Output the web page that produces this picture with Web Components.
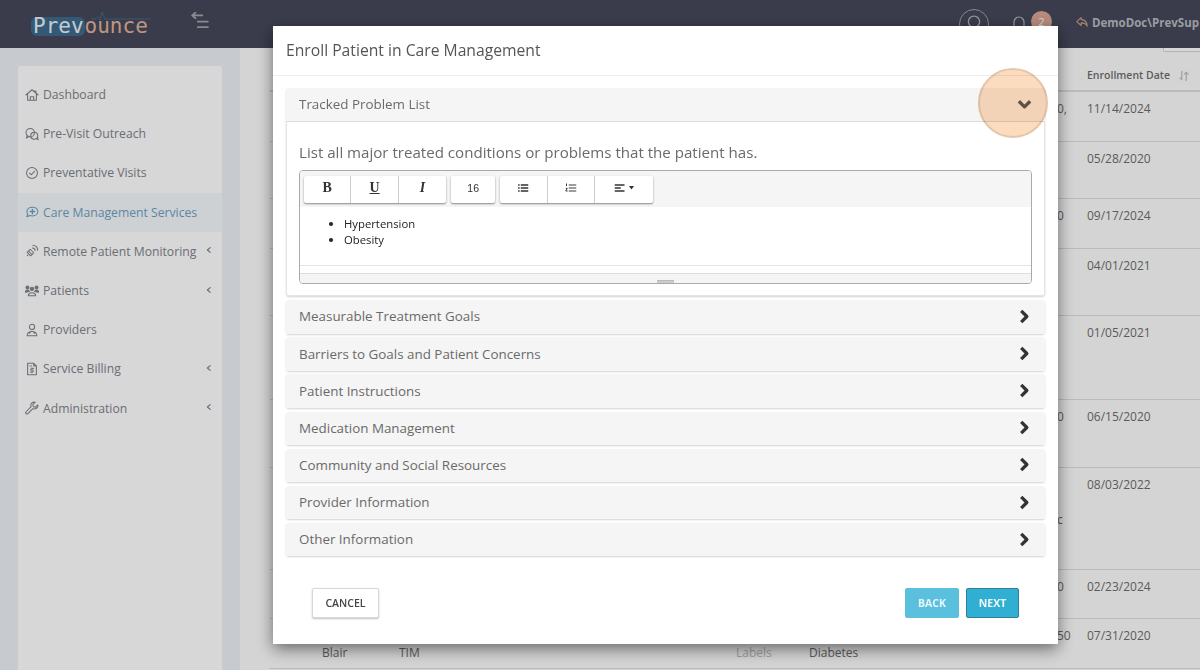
<!DOCTYPE html>
<html lang="en">
<head>
<meta charset="utf-8">
<title>Enroll Patient in Care Management</title>
<style>
	html, body { margin: 0; height: 100%; overflow: hidden; background: #fff; }
	body { font-family: "Open Sans", "Liberation Sans", sans-serif; }
</style>
</head>
<body>

<app-shell>
	<top-bar slot="top"></top-bar>
	<side-nav slot="side">
		<nav-item icon="home">Dashboard</nav-item>
		<nav-item icon="chats">Pre-Visit Outreach</nav-item>
		<nav-item icon="check">Preventative Visits</nav-item>
		<nav-item icon="chatplus" active>Care Management Services</nav-item>
		<nav-item icon="signal" more>Remote Patient Monitoring</nav-item>
		<nav-item icon="users" more>Patients</nav-item>
		<nav-item icon="doctor">Providers</nav-item>
		<nav-item icon="bill" more>Service Billing</nav-item>
		<nav-item icon="wrench" more>Administration</nav-item>
	</side-nav>
	<patient-table slot="main">
		<table-row h="50" date="11/14/2024" code="0,"></table-row>
		<table-row h="57" date="05/28/2020"></table-row>
		<table-row h="50" date="09/17/2024" code="0"></table-row>
		<table-row h="67" date="04/01/2021"></table-row>
		<table-row h="84" date="01/05/2021"></table-row>
		<table-row h="68" date="06/15/2020" code="0"></table-row>
		<table-row h="102" date="08/03/2022" extra="c"></table-row>
		<table-row h="49" date="02/23/2024" code="0"></table-row>
		<table-row h="50" date="07/31/2020" code="50" last="Blair" first="TIM" label="Labels" cond="Diabetes"></table-row>
	</patient-table>
</app-shell>

<enroll-modal>
	<acc-panel open>Tracked Problem List
		<div slot="body" class="prompt">List all major treated conditions or problems that the patient has.</div>
		<rich-editor slot="body"></rich-editor>
	</acc-panel>
	<acc-panel>Measurable Treatment Goals</acc-panel>
	<acc-panel>Barriers to Goals and Patient Concerns</acc-panel>
	<acc-panel>Patient Instructions</acc-panel>
	<acc-panel>Medication Management</acc-panel>
	<acc-panel>Community and Social Resources</acc-panel>
	<acc-panel>Provider Information</acc-panel>
	<acc-panel>Other Information</acc-panel>
</enroll-modal>

<script>
const svg = ( body, size = 14, box = 16 ) =>
	`<svg width="${size}" height="${size}" viewBox="0 0 ${box} ${box}" fill="none" stroke="currentColor" stroke-width="1.2" stroke-linecap="round" stroke-linejoin="round">${body}</svg>`

const NAV_ICONS = {
	home: `<path d="M1 8 8 2l7 6M3 7v7h10V7M6 14v-4h4v4M11 3.5h1.5V5"/>`,
	chats: `<circle cx="6" cy="6.5" r="4.8"/><circle cx="10.5" cy="10" r="4"/><path d="M2.5 10 1.5 12.5 4.5 11M13 13l2 1.5-.6-2.6"/>`,
	check: `<circle cx="8" cy="8" r="6.2"/><path d="M5.3 8.2 7.3 10l3.5-3.8"/>`,
	chatplus: `<path d="M8.5 2.5c3.6 0 6.2 2.2 6.2 5s-2.600 5-6.200 5c-1 0-1.900-.2-2.700-.5L2 13.500l1.200-3C2.500 9.600 2.200 8.600 2.200 7.500c0-2.800 2.700-5 6.300-5Z"/><path d="M8.500 5v5M6 7.500h5" stroke-width="1.600"/>`,
	signal: `<path d="M2.500 9.500 6 6l4 4-3.500 3.500Z"/><path d="M4 8l4 4M2.500 13.500l1-1M8.500 4.500c1.700 0 3 1.300 3 3M9 1.500c3 0 5.500 2.500 5.500 5.500"/>`,
	users: `<circle cx="2.800" cy="4" r="1.700" fill="currentColor"/><circle cx="8" cy="5.500" r="1.900" fill="currentColor"/><circle cx="13.200" cy="4" r="1.700" fill="currentColor"/><path d="M.5 9.500c0-1.500 1-2.500 2.300-2.500s2 .5 2.200 1.500ZM11 8.500c.2-1 1-1.500 2.200-1.500s2.300 1 2.300 2.500Z" fill="currentColor"/><path d="M3.800 13.500c0-2 1.800-3.500 4.200-3.500s4.200 1.500 4.200 3.500Z"/>`,
	doctor: `<circle cx="8" cy="4.500" r="3"/><path d="M2.500 14.500c0-3 2.500-4.800 5.500-4.800s5.500 1.800 5.500 4.800ZM5.500 10v2M10.500 10v2"/>`,
	bill: `<path d="M3 1.500h7l3 3v10H3ZM10 1.500v3h3"/><path d="M5.500 4.500h2M10 7.500H7c-1 0-1 2 0 2h2c1 0 1 2 0 2H6M8 6.500v6" stroke-width="1"/>`,
	wrench: `<path d="M14.500 4.500 12 7 9.500 6.500 9 4 11.500 1.500C9.500.8 7.300 1.800 6.800 3.800 6.500 4.800 6.700 5.800 7 6.500L1.500 12c-.8.800-.8 1.700-.2 2.300s1.500.600 2.300-.2L9 8.700c.8.400 1.700.500 2.700.2 2-.5 3.400-2.400 2.800-4.400Z"/>`,
	}

class AppShell extends HTMLElement {
	constructor() {
		super()
		this.attachShadow({ mode: "open" }).innerHTML = `<style>
				:host {
					display: grid;
					grid-template-columns: 240px 1fr;
					grid-template-rows: 48px 622px;
					width: 1200px;
					height: 670px;
					overflow: hidden;
					}
				.top { grid-column: 1 / 3; }
				</style>
			<div class="top"><slot name="top"></slot></div>
			<slot name="side"></slot>
			<slot name="main"></slot>`
		}
	static { customElements.define( "app-shell", this ) }
	}

class TopBar extends HTMLElement {
	constructor() {
		super()
		this.attachShadow({ mode: "open" }).innerHTML = `<style>
				:host {
					display: flex;
					align-items: center;
					height: 48px;
					background: #45485a;
					color: #b4b6bc;
					}
				.logo {
					position: relative;
					display: flex;
					margin: 4px 0 0 33px;
					width: 116px;
					font: 400 21px/19px "DejaVu Sans Mono", monospace;
					}
				.logo b {
					font-weight: 400;
					color: #e9f2f8;
					background: #3d6a8c;
					border-radius: 6px;
					padding: 0 1px 0 2px;
					margin-left: -2px;
					}
				.logo i { font-style: normal; color: #e1b29b; }
				.logo svg { position: absolute; left: 58px; top: -6px; }
				.menu { margin-left: 42px; margin-top: -6px; color: #a3a5ac; display: flex; }
				.right { margin-left: auto; display: flex; align-items: center; white-space: nowrap; }
				.search { width: 28px; border: 1px solid #a0a2aa; border-radius: 50%; display: flex; justify-content: center; padding-top: 5px; height: 23px; }
				.bell { margin-left: 22px; display: flex; margin-top: -2px; }
				.badge {
					width: 21px; height: 21px;
					border-radius: 50%;
					background: #d9a594;
					color: #fff;
					font-size: 11px;
					line-height: 21px;
					text-align: center;
					margin: -6px 0 0 4px;
					}
				.user { margin: -4px 0 0 23px; width: 125px; display: flex; align-items: center; gap: 3px; font-weight: 700; font-size: 11.500px; color: #b8bac0; }
				.user svg { flex: none; color: #c99e88; }
				</style>
			<div class="logo">
				<b>Prev</b><i>ounce</i>
				<svg width="60" height="12" viewBox="0 0 60 12" fill="none" stroke="#3d6a8c" stroke-width="1"><path d="M0 8h4l3-2 2 3 2-8 3 7h46"/></svg>
				</div>
			<div class="menu">${svg( `<path d="M1 3h9M1 3l3-2.500M1 3l3 2.500M6 8.500h9M6 13.500h9" stroke-width="1.600"/>`, 18 )}</div>
			<div class="right">
				<div class="search">${svg( `<circle cx="8" cy="6" r="5"/>`, 18 )}</div>
				<div class="bell">${svg( `<path d="M3 13V7a5 5 0 0 1 10 0v6Z"/>`, 16 )}</div>
				<div class="badge">2</div>
				<div class="user">${svg( `<path d="M7 3 2 7.500 7 12V9c3 0 6 1 7 4 0-5-3-7.500-7-8Z"/>`, 14 )}<span>DemoDoc\\PrevSup</span></div>
				</div>`
		}
	static { customElements.define( "top-bar", this ) }
	}

class SideNav extends HTMLElement {
	constructor() {
		super()
		this.attachShadow({ mode: "open" }).innerHTML = `<style>
				:host {
					display: flex;
					flex-direction: column;
					background: #edf1f7;
					padding: 18px 18px 0;
					}
				.card {
					flex: 1;
					background: #fff;
					border-radius: 3px 3px 0 0;
					padding-top: 9px;
					}
				</style>
			<div class="card"><slot></slot></div>`
		}
	static { customElements.define( "side-nav", this ) }
	}

class NavItem extends HTMLElement {
	constructor() {
		super()
		let chevron = this.hasAttribute( "more" )
			? svg( `<path d="M6.500 2 3 5l3.500 3" stroke-width="1.500"/>`, 8, 10 )
			: ""
		this.attachShadow({ mode: "open" }).innerHTML = `<style>
				:host {
					display: flex;
					align-items: center;
					height: 39.2px;
					padding-left: 7px;
					font-size: 12.2px;
					color: #7e838b;
					white-space: nowrap;
					}
				:host([active]) { background: #f4f8fc; color: #6ea1c0; }
				.icon { width: 14px; height: 14px; margin-right: 4px; display: flex; }
				.more { margin-left: auto; margin-right: 9px; display: flex; margin-top: -2px; }
				</style>
			<span class="icon">${svg( NAV_ICONS[ this.getAttribute( "icon" ) ] )}</span>
			<slot></slot>
			<span class="more">${chevron}</span>`
		}
	static { customElements.define( "nav-item", this ) }
	}

class PatientTable extends HTMLElement {
	constructor() {
		super()
		this.attachShadow({ mode: "open" }).innerHTML = `<style>
				:host {
					display: block;
					background: #fcfcfc;
					padding-left: 30px;
					overflow: hidden;
					}
				.head {
					display: flex;
					justify-content: flex-end;
					align-items: flex-end;
					height: 40px;
					box-sizing: border-box;
					border-bottom: 2px solid #dedede;
					font-size: 10.500px;
					font-weight: 600;
					color: #6e6e6e;
					padding: 0 10px 8px 0;
					}
				.head span { width: 91px; }
				.head svg { color: #c4c4c4; }
				.pill { height: 4px; margin-left: 893px; width: 60px; border: 1px solid #d6d6d6; border-top: 0; box-sizing: border-box; background: #fff; border-radius: 0 0 2px 2px; }
				</style>
			<div class="pill"></div>
			<div class="head"><span>Enrollment Date</span>${svg( `<path d="M5 2v11M2.500 10.500 5 13M11 14V3M8.500 5.500 11 3M13.500 5.500 11 3" stroke-width="1.800"/>`, 12 )}</div>
			<slot></slot>`
		}
	static { customElements.define( "patient-table", this ) }
	}

class TableRow extends HTMLElement {
	constructor() {
		super()
		let cell = name => this.getAttribute( name ) ?? ""
		this.attachShadow({ mode: "open" }).innerHTML = `<style>
				:host {
					display: grid;
					grid-template-columns: 52px 77px 337px 73px 248px 30px 1fr;
					box-sizing: border-box;
					border-bottom: 1px solid #dedede;
					padding-top: 9px;
					font-size: 12px;
					line-height: 16px;
					color: #6c6c6c;
					}
				.low { padding-top: 17px; }
				.label { color: #bcbcbc; }
				.extra { margin-top: 35px; }
				</style>
			<span></span>
			<span class="low">${cell( "last" )}</span>
			<span class="low">${cell( "first" )}</span>
			<span class="low label">${cell( "label" )}</span>
			<span class="low">${cell( "cond" )}</span>
			<span>${cell( "code" )}<div class="extra">${cell( "extra" )}</div></span>
			<span>${cell( "date" )}</span>`
		this.style.height = cell( "h" ) + "px"
		}
	static { customElements.define( "table-row", this ) }
	}

class EnrollModal extends HTMLElement {
	constructor() {
		super()
		this.attachShadow({ mode: "open" }).innerHTML = `<style>
				:host {
					position: fixed;
					inset: 0;
					display: block;
					background: rgba(0,0,0,.157);
					}
				.dialog {
					position: absolute;
					left: 273px;
					top: 26px;
					width: 785px;
					height: 618px;
					background: #fff;
					box-shadow: 0 5px 15px rgba(0,0,0,.5);
					display: flex;
					flex-direction: column;
					color: #555;
					}
				header {
					height: 50px;
					box-sizing: border-box;
					border-bottom: 1px solid #eee;
					padding: 14px 13px 0;
					font-size: 15.700px;
					line-height: 20px;
					color: #555;
					}
				.panels {
					display: flex;
					flex-direction: column;
					gap: 3.770px;
					padding: 12px 13px 0;
					}
				footer {
					display: flex;
					padding: 32px 39px 0;
					gap: 7px;
					}
				.spacer { flex: 1; }
				.halo {
					position: absolute;
					left: 705px;
					top: 42px;
					width: 70px;
					height: 70px;
					box-sizing: border-box;
					border-radius: 50%;
					background: #fcdcbf;
					border: 2px solid #e6c6aa;
					mix-blend-mode: multiply;
					}
				</style>
			<div class="dialog">
				<header>Enroll Patient in Care Management</header>
				<div class="panels"><slot></slot></div>
				<footer>
					<plain-btn kind="light">CANCEL</plain-btn>
					<div class="spacer"></div>
					<plain-btn kind="back">BACK</plain-btn>
					<plain-btn kind="next">NEXT</plain-btn>
				</footer>
				<div class="halo"></div>
			</div>`
		}
	static { customElements.define( "enroll-modal", this ) }
	}

class AccPanel extends HTMLElement {
	constructor() {
		super()
		let open = this.hasAttribute( "open" )
		let arrow = open
			? `<path d="M2 4.500 8 10.500 14 4.500" stroke-width="3.500" stroke-linecap="butt"/>`
			: `<path d="M4.500 2 10.500 8 4.500 14" stroke-width="3.500" stroke-linecap="butt"/>`
		this.attachShadow({ mode: "open" }).innerHTML = `<style>
				:host {
					display: block;
					border-radius: 3px;
					box-shadow: 0 1px 2px rgba(0,0,0,.18);
					color: #6a6a6a;
					}
				.title {
					display: flex;
					align-items: center;
					justify-content: space-between;
					height: 33.400px;
					box-sizing: border-box;
					padding: 0 13px 1px;
					background: #f5f5f5;
					font-size: 13.400px;
					border-radius: 3px 3px 0 0;
					}
				.title svg { color: #333; display: block; }
				:host([open]) .title svg { color: #5f5d5a; }
				.body {
					border: 1px solid #e4e4e4;
					border-top: 1px solid #ddd;
					border-radius: 0 0 3px 3px;
					padding: 20px 12px 12px;
					height: 175px;
					box-sizing: border-box;
					}
				:host(:not([open])) .body { display: none; }
				::slotted(.prompt) {
					font-size: 15.100px;
					line-height: 20px;
					color: #6a6a6a;
					margin-bottom: 8px;
					}
				</style>
			<div class="title"><span><slot></slot></span>${svg( arrow, 15 )}</div>
			<div class="body"><slot name="body"></slot></div>`
		}
	static { customElements.define( "acc-panel", this ) }
	}

class RichEditor extends HTMLElement {
	constructor() {
		super()
		this.attachShadow({ mode: "open" }).innerHTML = `<style>
				:host {
					display: block;
					height: 114px;
					box-sizing: border-box;
					border: 1px solid #a9a9a9;
					border-radius: 4px;
					overflow: hidden;
					font-size: 11.300px;
					color: #222;
					}
				.bar {
					height: 36px;
					box-sizing: border-box;
					background: #f5f5f5;
					padding: 5px 4px 0;
					display: flex;
					gap: 5px;
					}
				.group { display: flex; height: 27px; border-radius: 2px; box-shadow: 0 1px 2px rgba(0,0,0,.45); background: #fff; }
				.text {
					height: 59px;
					box-sizing: border-box;
					border-bottom: 1px solid #e4e4e4;
					}
				ul { margin: 0; padding: 9px 0 0 44px; line-height: 16px; }
				.foot { height: 17px; box-sizing: border-box; background: #f5f5f5; border-top: 1px solid #ddd; display: flex; justify-content: center; align-items: center; margin-top: 7px; }
				.foot i { width: 17px; height: 3px; border-top: 1px solid #bbb; border-bottom: 1px solid #bbb; background: #ccc; }
				</style>
			<div class="bar">
				<div class="group">
					<tool-btn><b style="font-family:'Liberation Serif',serif;font-size:14px">B</b></tool-btn>
					<tool-btn><b style="font-family:'Liberation Serif',serif;font-size:14px;text-decoration:underline">U</b></tool-btn>
					<tool-btn><b style="font-family:'Liberation Serif',serif;font-size:14px;font-style:italic">I</b></tool-btn>
				</div>
				<div class="group"><tool-btn w="44">16</tool-btn></div>
				<div class="group">
					<tool-btn>${svg( `<path d="M1.500 4h2M1.500 8h2M1.500 12h2M5 4h10M5 8h10M5 12h10" stroke-width="1.800" stroke-linecap="butt"/>`, 12 )}</tool-btn>
					<tool-btn>${svg( `<path d="M2 2v3.500M1 8.500h2L1 12h2.500M5 4h10M5 8h10M5 12h10" stroke-width="1.300" stroke-linecap="butt"/>`, 12 )}</tool-btn>
					<tool-btn w="58">${svg( `<path d="M1 4h13M1 8h8M1 12h13" stroke-width="1.800" stroke-linecap="butt"/>`, 12 )}<svg width="5" height="4" viewBox="0 0 5 4" style="margin-left:3px"><path d="M0 0h5L2.500 3.500Z" fill="currentColor"/></svg></tool-btn>
				</div>
			</div>
			<div class="text"><ul><li>Hypertension</li><li>Obesity</li></ul></div>
			<div class="foot"><i></i></div>`
		}
	static { customElements.define( "rich-editor", this ) }
	}

class ToolBtn extends HTMLElement {
	constructor() {
		super()
		this.attachShadow({ mode: "open" }).innerHTML = `<style>
				:host {
					display: flex;
					align-items: center;
					justify-content: center;
					width: ${this.getAttribute( "w" ) ?? 47.4}px;
					box-sizing: border-box;
					border-right: 1px solid #ccc;
					padding-bottom: 3px;
					font: 10.500px "Liberation Sans", sans-serif;
					color: #333;
					}
				:host(:last-child) { border-right: 0; }
				</style>
			<slot></slot>`
		}
	static { customElements.define( "tool-btn", this ) }
	}

class PlainBtn extends HTMLElement {
	constructor() {
		super()
		this.attachShadow({ mode: "open" }).innerHTML = `<style>
				:host {
					display: flex;
					align-items: center;
					justify-content: center;
					height: 30px;
					box-sizing: border-box;
					border-radius: 2px;
					font-size: 10.500px;
					font-weight: 700;
					}
				:host([kind=light]) { width: 67px; background: #fff; border: 1px solid #d8d8d8; box-shadow: 0 1px 2px rgba(0,0,0,.25); color: #444; font-weight: 600; }
				:host([kind=back]) { width: 54px; background: #5bc0de; color: #e8f7fb; }
				:host([kind=next]) { width: 53px; background: #31afd2; color: #f0fafd; border: 1px solid #2f7f9f; }
				</style>
			<slot></slot>`
		}
	static { customElements.define( "plain-btn", this ) }
	}
</script>
</body>
</html>
